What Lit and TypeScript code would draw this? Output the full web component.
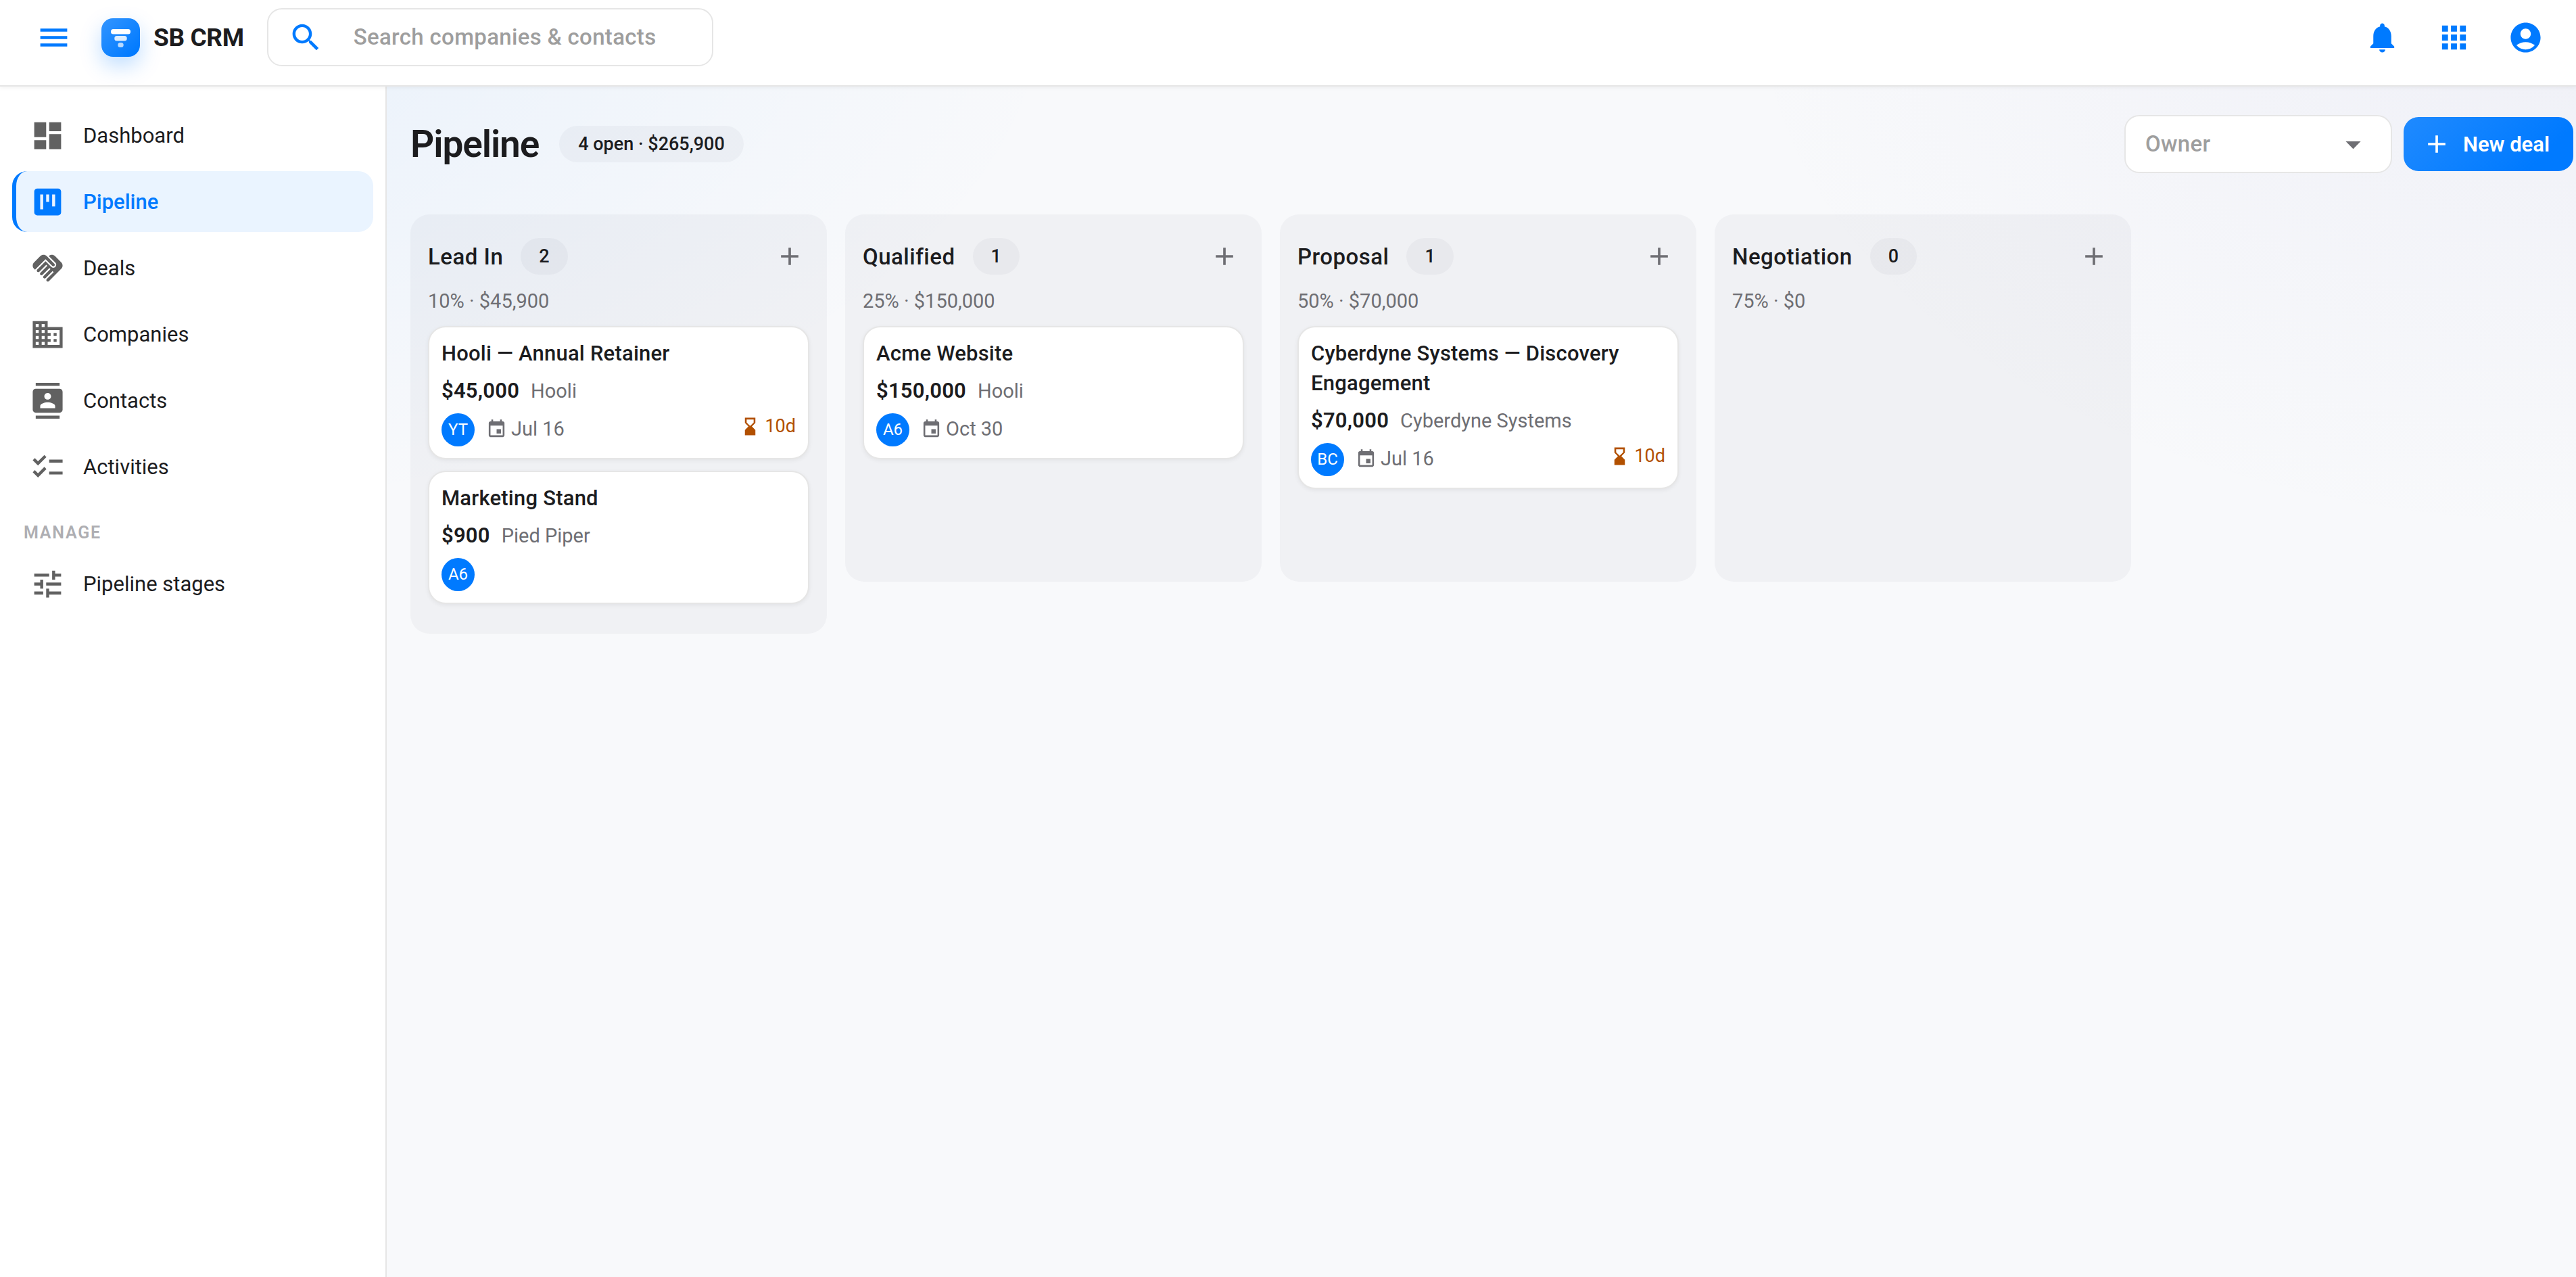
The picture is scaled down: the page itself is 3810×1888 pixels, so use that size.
import { LitElement, html, css, svg } from "lit";
import { customElement, property } from "lit/decorators.js";
import { classMap } from "lit/directives/class-map.js";

const ICONS: Record<string, string> = {
  menu: "M3 18h18v-2H3v2zm0-5h18v-2H3v2zm0-7v2h18V6H3z",
  search:
    "M15.5 14h-.79l-.28-.27C15.41 12.59 16 11.11 16 9.5 16 5.91 13.09 3 9.5 3S3 5.91 3 9.5 5.91 16 9.5 16c1.61 0 3.09-.59 4.23-1.57l.27.28v.79l5 4.99L20.49 19l-4.99-5zm-6 0C7.01 14 5 11.99 5 9.5S7.01 5 9.5 5 14 7.01 14 9.5 11.99 14 9.5 14z",
  bell: "M12 22c1.1 0 2-.9 2-2h-4c0 1.1.89 2 2 2zm6-6v-5c0-3.07-1.64-5.64-4.5-6.32V4c0-.83-.67-1.5-1.5-1.5s-1.5.67-1.5 1.5v.68C7.63 5.36 6 7.92 6 11v5l-2 2v1h16v-1l-2-2z",
  apps: "M4 8h4V4H4v4zm6 12h4v-4h-4v4zm-6 0h4v-4H4v4zm0-6h4v-4H4v4zm6 0h4v-4h-4v4zm6-10v4h4V4h-4zm-6 4h4V4h-4v4zm6 6h4v-4h-4v4zm0 6h4v-4h-4v4z",
  account:
    "M12 2C6.48 2 2 6.48 2 12s4.48 10 10 10 10-4.48 10-10S17.52 2 12 2zm0 4c1.93 0 3.5 1.57 3.5 3.5S13.93 13 12 13s-3.5-1.57-3.5-3.5S10.07 6 12 6zm0 14c-2.03 0-4.43-.82-6.14-2.88C7.55 15.8 9.68 15 12 15s4.45.8 6.14 2.12C16.43 19.18 14.03 20 12 20z",
  dashboard: "M3 13h8V3H3v10zm0 8h8v-6H3v6zm10 0h8V11h-8v10zm0-18v6h8V3h-8z",
  kanban:
    "M19 3H5c-1.1 0-2 .9-2 2v14c0 1.1.9 2 2 2h14c1.1 0 2-.9 2-2V5c0-1.1-.9-2-2-2zM9 17H7V7h2v10zm4-5h-2V7h2v5zm4 3h-2V7h2v8z",
  handshake:
    "M16.48 10.41c-.39.39-1.04.39-1.43 0l-4.47-4.46-7.05 7.04-.66-.63c-1.17-1.17-1.17-3.07 0-4.24l4.24-4.24c1.17-1.17 3.07-1.17 4.24 0L16.48 9c.39.39.39 1.02 0 1.41zm.7-2.12c.78.78.78 2.05 0 2.83-1.27 1.27-2.61.22-2.83 0l-3.76-3.76-5.57 5.57c-.39.39-.39 1.02 0 1.41.39.39 1.02.39 1.42 0l4.62-4.62.71.71-4.62 4.62c-.39.39-.39 1.02 0 1.41.39.39 1.02.39 1.42 0l4.62-4.62.71.71-4.62 4.62c-.39.39-.39 1.02 0 1.41.39.39 1.02.39 1.41 0l4.62-4.62.71.71-4.62 4.62c-.39.39-.39 1.02 0 1.41.39.39 1.02.39 1.41 0l8.32-8.34c1.17-1.17 1.17-3.07 0-4.24l-4.24-4.24c-1.15-1.15-3.01-1.17-4.18-.06l4.47 4.47z",
  business:
    "M12 7V3H2v18h20V7H12zM6 19H4v-2h2v2zm0-4H4v-2h2v2zm0-4H4V9h2v2zm0-4H4V5h2v2zm4 12H8v-2h2v2zm0-4H8v-2h2v2zm0-4H8V9h2v2zm0-4H8V5h2v2zm10 12h-8v-2h2v-2h-2v-2h2v-2h-2V9h8v10zm-2-8h-2v2h2v-2zm0 4h-2v2h2v-2z",
  contacts:
    "M20 0H4v2h16V0zM4 24h16v-2H4v2zM20 4H4c-1.1 0-2 .9-2 2v12c0 1.1.9 2 2 2h16c1.1 0 2-.9 2-2V6c0-1.1-.9-2-2-2zm-8 2.75c1.24 0 2.25 1.01 2.25 2.25s-1.01 2.25-2.25 2.25S9.75 10.24 9.75 9 10.76 6.75 12 6.75zM17 17H7v-1.5c0-1.67 3.33-2.5 5-2.5s5 .83 5 2.5V17z",
  checklist:
    "M22 7h-9v2h9V7zm0 8h-9v2h9v-2zM5.54 11L2 7.46l1.41-1.41 2.12 2.12 4.24-4.24 1.41 1.41L5.54 11zm0 8L2 15.46l1.41-1.41 2.12 2.12 4.24-4.24 1.41 1.41L5.54 19z",
  tune: "M3 17v2h6v-2H3zM3 5v2h10V5H3zm10 16v-2h8v-2h-8v-2h-2v6h2zM7 9v2H3v2h4v2h2V9H7zm14 4v-2H11v2h10zm-6-4h2V7h4V5h-4V3h-2v6z",
  add: "M19 13h-6v6h-2v-6H5v-2h6V5h2v6h6v2z",
  dropdown: "M7 10l5 5 5-5z",
  event:
    "M17 12h-5v5h5v-5zM16 1v2H8V1H6v2H5c-1.11 0-1.99.9-1.99 2L3 19c0 1.1.89 2 2 2h14c1.1 0 2-.9 2-2V5c0-1.1-.9-2-2-2h-1V1h-2zm3 18H5V8h14v11z",
  hourglass:
    "M18 22l-.01-6L14 12l3.99-4.01L18 2H6v6l4 4-4 3.99V22h12zM8 7.5V4h8v3.5l-4 4-4-4z",
};

const icon = (name: string, size: "lg" | "md" | "sm" = "lg") => html`
  <svg class="icon ${size}" viewBox="0 0 24 24" aria-hidden="true">
    ${svg`<path d=${ICONS[name]}></path>`}
  </svg>
`;

const iconStyles = css`
  .icon {
    display: block;
    flex: none;
    fill: currentColor;
  }
  .lg {
    width: 53px;
    height: 53px;
  }
  .md {
    width: 44px;
    height: 44px;
  }
  .sm {
    width: 31px;
    height: 31px;
  }
  button {
    font: inherit;
    border: 0;
    background: none;
    padding: 0;
    cursor: pointer;
  }
`;

interface Deal {
  title: string;
  amount: string;
  company: string;
  owner: string;
  due?: string;
  idle?: string;
}

interface Stage {
  name: string;
  summary: string;
  deals: Deal[];
}

const STAGES: Stage[] = [
  {
    name: "Lead In",
    summary: "10% · $45,900",
    deals: [
      { title: "Hooli — Annual Retainer", amount: "$45,000", company: "Hooli", owner: "YT", due: "Jul 16", idle: "10d" },
      { title: "Marketing Stand", amount: "$900", company: "Pied Piper", owner: "A6" },
    ],
  },
  {
    name: "Qualified",
    summary: "25% · $150,000",
    deals: [{ title: "Acme Website", amount: "$150,000", company: "Hooli", owner: "A6", due: "Oct 30" }],
  },
  {
    name: "Proposal",
    summary: "50% · $70,000",
    deals: [
      {
        title: "Cyberdyne Systems — Discovery Engagement",
        amount: "$70,000",
        company: "Cyberdyne Systems",
        owner: "BC",
        due: "Jul 16",
        idle: "10d",
      },
    ],
  },
  { name: "Negotiation", summary: "75% · $0", deals: [] },
];

@customElement("crm-header")
export class CrmHeader extends LitElement {
  static styles = [
    iconStyles,
    css`
      :host {
        display: block;
        position: relative;
        z-index: 1;
        background: #fff;
        border-bottom: 2px solid #e6e6e6;
        box-shadow: 0 2px 6px rgba(0, 0, 0, 0.05);
      }
      .bar {
        display: flex;
        align-items: center;
        padding: 2px 22px 18px 26px;
        color: #007aff;
      }
      .tool {
        display: grid;
        place-items: center;
        width: 106px;
        height: 106px;
        color: inherit;
      }
      .brand {
        display: flex;
        align-items: center;
        gap: 20px;
        margin: 0 34px 0 18px;
        color: #1c1c1e;
        font-size: 37px;
        font-weight: 700;
        letter-spacing: -0.01em;
        text-decoration: none;
      }
      .logo {
        display: block;
        width: 57px;
        height: 57px;
        border-radius: 17px;
        background: linear-gradient(135deg, #3395ff, #007aff 90%);
        box-shadow: 0 13px 31px rgba(0, 122, 255, 0.25);
      }
      .search {
        display: flex;
        align-items: center;
        gap: 44px;
        box-sizing: border-box;
        width: 660px;
        height: 86px;
        padding: 0 29px;
        border: 2px solid #e6e6e6;
        border-radius: 22px;
      }
      .search input {
        flex: 1;
        min-width: 0;
        padding: 0;
        border: 0;
        outline: 0;
        background: none;
        color: #1c1c1e;
        font: 500 33px/44px Roboto, sans-serif;
        letter-spacing: 0.01em;
      }
      .search input::placeholder {
        color: #9e9e9e;
        opacity: 1;
      }
      .tools {
        display: flex;
        margin-left: auto;
      }
    `,
  ];

  render() {
    return html`
      <header class="bar">
        <button class="tool" aria-label="Toggle navigation">${icon("menu")}</button>
        <a class="brand" href="#home">
          <svg class="logo" viewBox="0 0 57 57" aria-hidden="true">
            <rect x="14" y="16" width="29" height="7.5" rx="3.5" fill="#fff"></rect>
            <rect x="19.3" y="26" width="18.4" height="7.4" rx="3.5" fill="#fff" opacity=".85"></rect>
            <rect x="24.3" y="36" width="8.4" height="7" rx="3.5" fill="#fff" opacity=".7"></rect>
          </svg>
          <span>SB CRM</span>
        </a>
        <label class="search">
          ${icon("search")}
          <input type="search" placeholder="Search companies &amp; contacts" aria-label="Search companies and contacts" />
        </label>
        <div class="tools">
          <button class="tool" aria-label="Notifications">${icon("bell")}</button>
          <button class="tool" aria-label="Apps">${icon("apps")}</button>
          <button class="tool" aria-label="Account">${icon("account")}</button>
        </div>
      </header>
    `;
  }
}

@customElement("crm-sidebar")
export class CrmSidebar extends LitElement {
  static styles = [
    iconStyles,
    css`
      :host {
        display: block;
        box-sizing: border-box;
        padding: 27px 18px;
        background: #fff;
        border-right: 2px solid #e6e6e6;
      }
      .nav {
        display: flex;
        flex-direction: column;
        gap: 8px;
      }
      .item {
        display: flex;
        align-items: center;
        gap: 26px;
        height: 90px;
        padding: 0 20px;
        border-left: 6px solid transparent;
        border-radius: 22px;
        color: #1c1c1e;
        font-size: 31px;
        text-decoration: none;
      }
      .item .icon {
        color: #616161;
      }
      .active {
        border-left-color: #007aff;
        background: #eaf4ff;
        color: #007aff;
        font-weight: 500;
      }
      .active .icon {
        color: #007aff;
      }
      .group {
        margin: 0;
        padding: 28px 17px 5px;
        color: #aeaeb2;
        font-size: 25px;
        font-weight: 600;
        line-height: 34px;
        letter-spacing: 0.07em;
      }
    `,
  ];

  private item(name: string, label: string, active = false) {
    return html`<a class=${classMap({ item: true, active })} href="#${name}">${icon(name)}<span>${label}</span></a>`;
  }

  render() {
    return html`
      <nav class="nav">
        ${this.item("dashboard", "Dashboard")} ${this.item("kanban", "Pipeline", true)}
        ${this.item("handshake", "Deals")} ${this.item("business", "Companies")}
        ${this.item("contacts", "Contacts")} ${this.item("checklist", "Activities")}
        <h2 class="group">MANAGE</h2>
        ${this.item("tune", "Pipeline stages")}
      </nav>
    `;
  }
}

@customElement("deal-card")
export class DealCard extends LitElement {
  @property({ attribute: false }) deal!: Deal;

  static styles = [
    iconStyles,
    css`
      :host {
        display: block;
      }
      .card {
        display: flex;
        flex-direction: column;
        gap: 11px;
        padding: 17px 18px;
        border: 2px solid #e6e6e6;
        border-radius: 26px;
        background: #fff;
        box-shadow: 0 2px 6px rgba(0, 0, 0, 0.06);
        color: #1c1c1e;
        font-size: 31px;
        line-height: 44px;
      }
      .title {
        margin: 0;
        font: inherit;
        font-weight: 500;
        letter-spacing: 0.007em;
      }
      .value {
        display: flex;
        gap: 17px;
      }
      .amount {
        font-weight: 600;
        letter-spacing: 0.007em;
      }
      .company,
      .due {
        color: #6e6e73;
        font-size: 29px;
      }
      .meta {
        display: flex;
        align-items: flex-start;
      }
      .avatar {
        width: 49px;
        height: 49px;
        margin-right: 17px;
        border-radius: 50%;
        background: #007aff;
        color: #fff;
        font-size: 24px;
        line-height: 49px;
        text-align: center;
      }
      .due,
      .idle {
        display: flex;
        align-items: center;
        gap: 6px;
      }
      .due {
        line-height: 46px;
      }
      .idle {
        margin-left: auto;
        color: #b25000;
        font-size: 27px;
        line-height: 38px;
      }
    `,
  ];

  render() {
    const d = this.deal;
    return html`
      <article class="card">
        <h3 class="title">${d.title}</h3>
        <div class="value"><span class="amount">${d.amount}</span><span class="company">${d.company}</span></div>
        <div class="meta">
          <span class="avatar">${d.owner}</span>
          ${d.due ? html`<span class="due">${icon("event", "sm")}${d.due}</span>` : ""}
          ${d.idle ? html`<span class="idle">${icon("hourglass", "sm")}${d.idle}</span>` : ""}
        </div>
      </article>
    `;
  }
}

@customElement("stage-column")
export class StageColumn extends LitElement {
  @property({ attribute: false }) stage!: Stage;

  static styles = [
    iconStyles,
    css`
      :host {
        display: block;
        box-sizing: border-box;
        min-height: 543px;
        padding: 26px 26px 44px;
        border-radius: 28px;
        background: rgba(60, 60, 100, 0.045);
      }
      .head {
        display: flex;
        align-items: center;
        height: 72px;
      }
      .name {
        margin: 0 26px 0 0;
        color: #1c1c1e;
        font-size: 33px;
        font-weight: 500;
        letter-spacing: 0.015em;
      }
      .count {
        padding: 0 27px;
        border-radius: 27px;
        background: rgba(60, 60, 67, 0.04);
        color: #1c1c1e;
        font-size: 27px;
        font-weight: 500;
        line-height: 54px;
      }
      .add {
        margin-left: auto;
        padding: 7px;
        color: #6e6e73;
      }
      .summary {
        margin: 10px 0 17px;
        color: #6e6e73;
        font-size: 29px;
        line-height: 40px;
      }
      .deals {
        display: flex;
        flex-direction: column;
        gap: 17px;
      }
    `,
  ];

  render() {
    const s = this.stage;
    return html`
      <div class="head">
        <h2 class="name">${s.name}</h2>
        <span class="count">${s.deals.length}</span>
        <button class="add" aria-label="Add deal to ${s.name}">${icon("add", "md")}</button>
      </div>
      <p class="summary">${s.summary}</p>
      <div class="deals">${s.deals.map((d) => html`<deal-card .deal=${d}></deal-card>`)}</div>
    `;
  }
}

@customElement("app-root")
export class AppRoot extends LitElement {
  static styles = [
    iconStyles,
    css`
      :host {
        display: grid;
        grid-template-rows: auto 1fr;
        min-height: 100vh;
        background: radial-gradient(1584px 792px at 0% 0%, rgba(0, 122, 255, 0.075), rgba(0, 122, 255, 0)),
          radial-gradient(1250px 800px at 100% 0%, rgba(88, 86, 180, 0.055), rgba(88, 86, 180, 0)), #f8f9fb;
        font-family: Roboto, sans-serif;
        color: #1c1c1e;
      }
      .body {
        display: grid;
        grid-template-columns: 572px minmax(0, 1fr);
      }
      .main {
        padding: 42px 4px 42px 35px;
      }
      .toolbar {
        display: flex;
        align-items: center;
        height: 86px;
        margin-bottom: 61px;
      }
      .title {
        margin: 0 30px 0 0;
        font-size: 55px;
        font-weight: 600;
        letter-spacing: -0.02em;
      }
      .total {
        padding: 0 28px;
        border-radius: 27px;
        background: rgba(60, 60, 67, 0.04);
        font-size: 27px;
        font-weight: 500;
        line-height: 54px;
      }
      .owner {
        display: grid;
        align-items: center;
        width: 396px;
        margin: 0 17px 0 auto;
      }
      .owner select,
      .owner .icon {
        grid-area: 1 / 1;
      }
      .owner select {
        box-sizing: border-box;
        height: 86px;
        padding: 0 29px;
        border: 2px solid #e6e6e6;
        border-radius: 22px;
        background: #fff;
        color: #9e9e9e;
        font: 500 33px/44px Roboto, sans-serif;
        letter-spacing: 0.01em;
        appearance: none;
      }
      .owner .icon {
        justify-self: end;
        margin-right: 31px;
        color: #6e6e73;
        pointer-events: none;
      }
      .create {
        display: flex;
        align-items: center;
        gap: 17px;
        height: 80px;
        padding: 0 35px 0 27px;
        border-radius: 22px;
        background: linear-gradient(135deg, #1f8aff, #007aff 80%);
        color: #fff;
        font-size: 31px;
        font-weight: 600;
      }
      .board {
        display: grid;
        grid-template-columns: repeat(4, 616px);
        align-items: start;
        gap: 27px;
      }
    `,
  ];

  render() {
    return html`
      <crm-header></crm-header>
      <div class="body">
        <crm-sidebar></crm-sidebar>
        <main class="main">
          <div class="toolbar">
            <h1 class="title">Pipeline</h1>
            <span class="total">4 open · $265,900</span>
            <label class="owner">
              <select aria-label="Owner">
                <option>Owner</option>
              </select>
              ${icon("dropdown")}
            </label>
            <button class="create">${icon("add", "md")}<span>New deal</span></button>
          </div>
          <div class="board">${STAGES.map((s) => html`<stage-column .stage=${s}></stage-column>`)}</div>
        </main>
      </div>
    `;
  }
}
